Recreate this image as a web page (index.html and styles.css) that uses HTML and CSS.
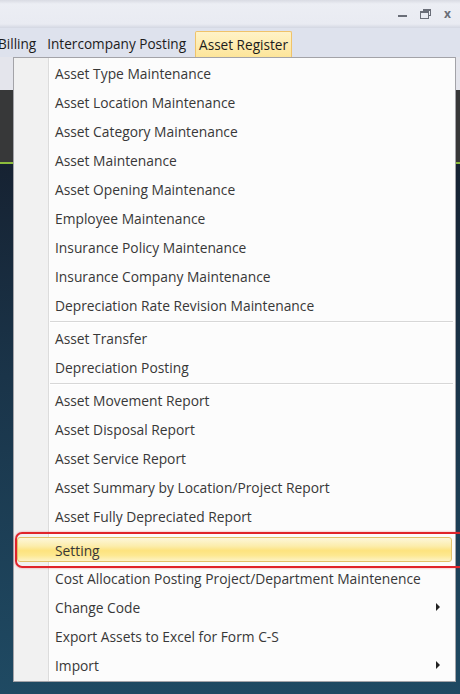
FILE: index.html
```html
<!DOCTYPE html>
<html>
<head>
<meta charset="utf-8">
<link rel="stylesheet" href="styles.css">
</head>
<body>
<div class="app">
  <div class="titlebar">
    <span class="ctl ctl-min"></span>
    <span class="ctl ctl-max"><span class="back"></span><span class="front"></span></span>
    <span class="ctl ctl-close">x</span>
  </div>
  <div class="menubar">
    <span class="mb-item mb-billing">Billing</span>
    <span class="mb-item">Intercompany Posting</span>
    <span class="mb-item mb-active">Asset Register</span>
  </div>
  <div class="workspace">
    <div class="ws-light"></div>
    <div class="ws-dark"></div>
    <div class="ws-green"></div>
    <div class="ws-navy"></div>
  </div>

  <div class="dropdown">
    <div class="item">Asset Type Maintenance</div>
    <div class="item">Asset Location Maintenance</div>
    <div class="item">Asset Category Maintenance</div>
    <div class="item">Asset Maintenance</div>
    <div class="item">Asset Opening Maintenance</div>
    <div class="item">Employee Maintenance</div>
    <div class="item">Insurance Policy Maintenance</div>
    <div class="item">Insurance Company Maintenance</div>
    <div class="item">Depreciation Rate Revision Maintenance</div>
    <div class="sep"></div>
    <div class="item">Asset Transfer</div>
    <div class="item">Depreciation Posting</div>
    <div class="sep"></div>
    <div class="item">Asset Movement Report</div>
    <div class="item">Asset Disposal Report</div>
    <div class="item">Asset Service Report</div>
    <div class="item">Asset Summary by Location/Project Report</div>
    <div class="item">Asset Fully Depreciated Report</div>
    <div class="sep"></div>
    <div class="item item-hot">Setting</div>
    <div class="item">Cost Allocation Posting Project/Department Maintenence</div>
    <div class="item has-sub">Change Code<span class="arrow"></span></div>
    <div class="item">Export Assets to Excel for Form C-S</div>
    <div class="item has-sub">Import<span class="arrow"></span></div>
  </div>

  <div class="callout"></div>
</div>
</body>
</html>
```

FILE: styles.css
```css
html, body {
  margin: 0;
  padding: 0;
}
body {
  width: 460px;
  height: 694px;
  overflow: hidden;
  font-family: "Open Sans", "Noto Sans", "DejaVu Sans", sans-serif;
}
.app {
  position: relative;
  width: 460px;
  height: 694px;
  display: flex;
  flex-direction: column;
  overflow: hidden;
}
.titlebar {
  height: 28px;
  box-sizing: border-box;
  background: linear-gradient(#d9dbe3 0, #eceef4 4px, #e9ebf2 24px, #d3d7e2 28px);
  display: flex;
  align-items: center;
  justify-content: flex-end;
  padding-right: 9px;
  gap: 13px;
}
.ctl {
  display: inline-block;
  position: relative;
}
.ctl-min {
  width: 9px;
  height: 2px;
  background: #6a6e78;
  margin-top: 4px;
}
.ctl-max {
  width: 11px;
  height: 10px;
}
.ctl-max .back {
  position: absolute;
  right: 0;
  top: 0;
  width: 8px;
  height: 7px;
  border: 1px solid #6a6e78;
  border-top-width: 2px;
  box-sizing: border-box;
}
.ctl-max .front {
  position: absolute;
  left: 0;
  bottom: 0;
  width: 9px;
  height: 8px;
  border: 1px solid #6a6e78;
  border-top-width: 2px;
  box-sizing: border-box;
  background: #e9ebf2;
}
.ctl-close {
  font-size: 12px;
  font-weight: bold;
  color: #6a6e78;
  line-height: 12px;
}
.menubar {
  height: 29px;
  background: #dee2ed;
  display: flex;
  align-items: flex-end;
  font-size: 13.6px;
  color: #1c1c1c;
}
.mb-item {
  height: 26px;
  line-height: 25px;
  padding: 0 4px;
  box-sizing: border-box;
  white-space: nowrap;
}
.mb-billing {
  margin-left: -6px;
  margin-right: 3px;
}
.mb-active {
  margin-left: 5px;
  padding: 0 3px;
  border: 1px solid #f0c36a;
  border-bottom: none;
  background: linear-gradient(#fff3c8, #fde59a);
  border-radius: 2px 2px 0 0;
}
.workspace {
  flex: 1;
  display: flex;
  flex-direction: column;
}
.ws-light {
  height: 33px;
  background: #e4e5ec;
}
.ws-dark {
  height: 72px;
  background: #373839;
}
.ws-green {
  height: 2px;
  background: #8cbc3c;
}
.ws-navy {
  flex: 1;
  background: linear-gradient(#162232, #1a3449 40%, #1f4a63);
}
.dropdown {
  position: absolute;
  left: 13px;
  top: 57px;
  width: 443px;
  box-sizing: border-box;
  border: 1px solid #a3a3a8;
  background: linear-gradient(90deg, #f1f1f1 0, #f1f1f1 34px, #dcdcdc 34px, #dcdcdc 35px, #fff 35px, #fcfcfc 36px);
  padding: 1px 2px 1px 2px;
  font-size: 13.8px;
  color: #383838;
}
.item {
  position: relative;
  height: 29px;
  line-height: 29px;
  padding-left: 39px;
  white-space: nowrap;
}
.sep {
  height: 4px;
  margin-left: 34px;
  position: relative;
}
.sep::before {
  content: "";
  position: absolute;
  left: 0;
  right: 0;
  top: 1px;
  height: 1px;
  background: #d7d7d7;
}
.sep::after {
  content: "";
  position: absolute;
  left: 0;
  right: 0;
  top: 2px;
  height: 1px;
  background: #fff;
}
.item-hot {
  margin: 2px 1px 2px 1px;
  height: 25px;
  line-height: 25px;
  padding-left: 37px;
  border: 1px solid #e3c16a;
  border-radius: 3px;
  box-sizing: border-box;
  background: linear-gradient(#fdf7da 0, #fcedac 35%, #fde37f 55%, #fde890 75%, #fdf3c6 100%);
}
.arrow {
  position: absolute;
  right: 13px;
  top: 10px;
  width: 0;
  height: 0;
  border-top: 4px solid transparent;
  border-bottom: 4px solid transparent;
  border-left: 4px solid #222;
}
.callout {
  position: absolute;
  left: 15px;
  top: 532px;
  width: 460px;
  height: 36px;
  box-sizing: border-box;
  border: 2px solid #e0242b;
  border-radius: 7px;
  box-shadow: 0 0 2px rgba(224, 36, 43, 0.5);
}
```
